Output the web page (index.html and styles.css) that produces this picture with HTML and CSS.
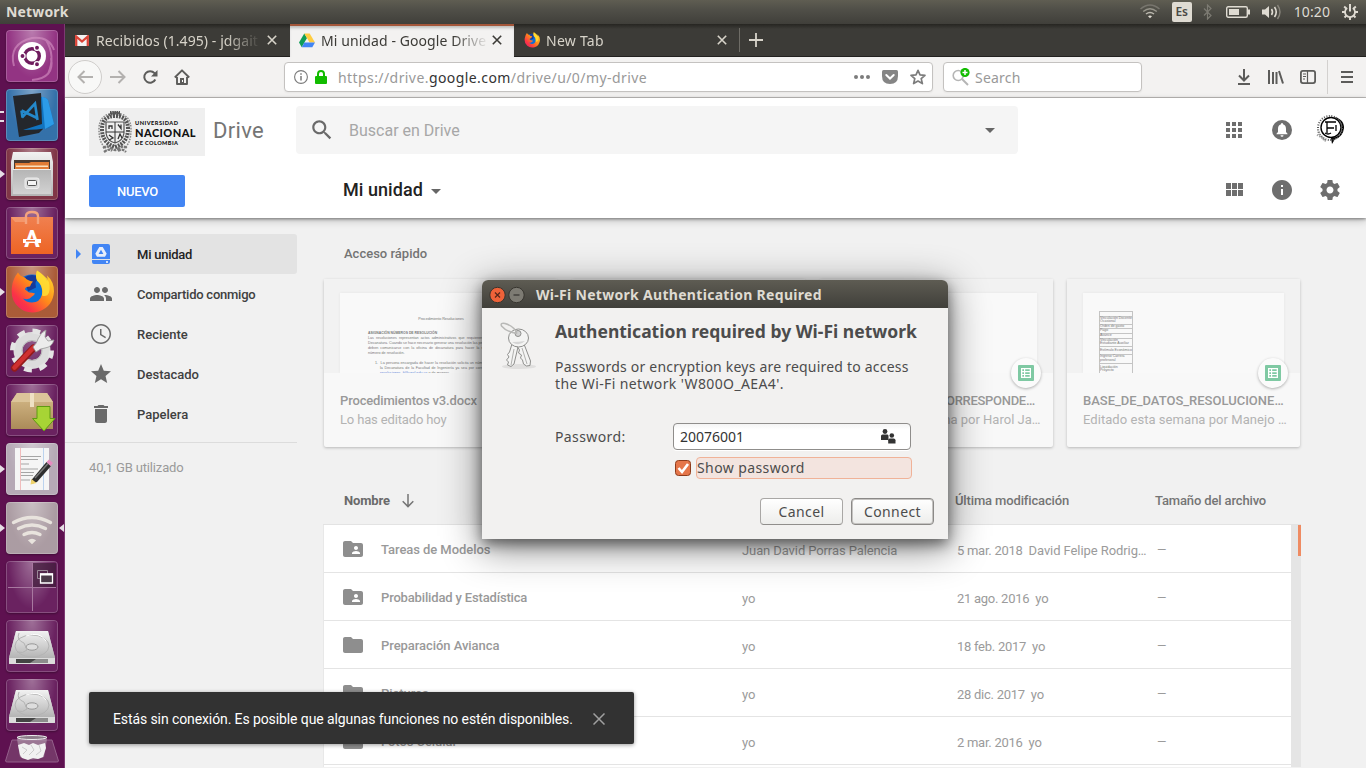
FILE: index.html
```html
<!DOCTYPE html>
<html lang="es">
<head>
<meta charset="utf-8">
<title>Mi unidad - Google Drive</title>
<link rel="stylesheet" href="styles.css">
</head>
<body>
<svg class="defs" width="0" height="0">
  <defs>
    <linearGradient id="metal" x1="0" y1="0" x2="0" y2="1"><stop offset="0" stop-color="#f2f2f2"/><stop offset="1" stop-color="#b4b4b4"/></linearGradient>
    <linearGradient id="front" x1="0" y1="0" x2="0" y2="1"><stop offset="0" stop-color="#b4b4b4"/><stop offset="1" stop-color="#d2d2d2"/></linearGradient>
    <linearGradient id="bag" x1="0" y1="0" x2="0" y2="1"><stop offset="0" stop-color="#f08050"/><stop offset="1" stop-color="#ed6424"/></linearGradient>
    <linearGradient id="fox" x1="1" y1="0" x2="0" y2="1"><stop offset="0" stop-color="#ffe52e"/><stop offset=".45" stop-color="#ff8a1a"/><stop offset=".75" stop-color="#fb3347"/><stop offset="1" stop-color="#e5206b"/></linearGradient>
    <linearGradient id="box" x1="0" y1="0" x2="0" y2="1"><stop offset="0" stop-color="#d6bb8a"/><stop offset="1" stop-color="#ab8b59"/></linearGradient>
    <symbol id="i-folder" viewBox="0 0 24 24"><path d="M10 4H4c-1.1 0-1.99.9-1.99 2L2 18c0 1.1.9 2 2 2h16c1.1 0 2-.9 2-2V8c0-1.1-.9-2-2-2h-8l-2-2z"/></symbol>
    <symbol id="i-shared" viewBox="0 0 24 24"><path d="M20 6h-8l-2-2H4c-1.1 0-1.99.9-1.99 2L2 18c0 1.1.9 2 2 2h16c1.1 0 2-.9 2-2V8c0-1.1-.9-2-2-2zm-5 3c1.1 0 2 .9 2 2s-.9 2-2 2-2-.9-2-2 .9-2 2-2zm4 8h-8v-1c0-1.33 2.67-2 4-2s4 .67 4 2v1z"/></symbol>
    <symbol id="i-sheet" viewBox="0 0 16 16"><rect width="16" height="16" rx="1" fill="#7fc9a3"/><path fill="#fff" fill-rule="evenodd" d="M3 3h10v10H3zM4.300 4.300v1.700h1.700v-1.700zM7.200 4.300v1.700h4.500v-1.700zM4.300 7.200v1.700h1.700v-1.700zM7.200 7.200v1.700h4.500v-1.700zM4.300 10.100v1.700h1.700v-1.700zM7.200 10.100v1.700h4.500v-1.700z"/></symbol>
    <symbol id="i-firefox" viewBox="0 0 44 44"><circle cx="22" cy="22" r="17" fill="#0a6fd8"/><path d="M14 8q8-5 16 0-6 3-4 10l-8 4z" fill="#153a9c"/><path fill="url(#fox)" d="M27 1q-2 5 0 10 6 5 5 14-2 8-10 8-6 0-9-4 6 2 9-2 2-1 3-3-3-1-6-1l-4-3q0-3 5-3 1-3 3-5-6-1-8-4-5-1-7-5-5 6-6 14-2 14 7 21 8 7 20 4 14-5 15-20 0-10-7-16 1 4 0 6-3-7-10-11z"/><path d="M27 1q-2 5 0 10 7 6 5 15 5 2 7-3 2-8-2-14-3-3-10-8z" fill="#ffe436" opacity=".8"/></symbol>
    <symbol id="i-disk" viewBox="0 0 52 52"><path d="M10 11h32l7 27v6H3v-6z" fill="#c9c9c9"/><path d="M10 11h32l7 27H3z" fill="url(#metal)"/><path d="M3 38h46v5q0 1-2 1H5q-2 0-2-1z" fill="#dcdcdc"/><path d="M10 39h32v4H10z" fill="#444"/><path d="M30 39h12v4H24z" fill="#8c8c8c"/><ellipse cx="26" cy="26" rx="17" ry="11" fill="none" stroke="#b4b4b4"/><path d="M20 16q14-5 20 5" fill="none" stroke="#fff"/><ellipse cx="26" cy="27" rx="6" ry="3.200" fill="#ddd" stroke="#999"/><path d="M13 13q-3 7 5 10l3 7q-4 4-10 2" fill="none" stroke="#b4b4b4"/></symbol>
  </defs>
</svg>

<div class="panel">
  <span class="panel-title">Network</span>
  <div class="indicators">
    <svg class="ind-wifi" width="20" height="16" viewBox="0 0 20 16" fill="none" stroke-width="1.500"><path d="M.5 5q9.500-8 19 0" stroke="#77756d"/><path d="M3.200 7.500q6.800-5.500 13.600 0" stroke="#96948a"/><path d="M6 10q4-3.200 8 0" stroke="#bcb9af"/><path d="M8 12.200q2-1.600 4 0l-2 2z" fill="#dfdbd2"/></svg>
    <span class="ind-lang">Es</span>
    <svg class="ind-bt" width="10" height="16" viewBox="0 0 10 16" fill="none" stroke="#7d7b73" stroke-width="1.200"><path d="M1 4.500l7 7-3.500 3.500V1L8 4.500l-7 7"/></svg>
    <svg class="ind-bat" width="24" height="12" viewBox="0 0 24 12"><rect x=".7" y=".7" width="20.600" height="10.600" rx="1.500" fill="none" stroke="#dfdbd2" stroke-width="1.400"/><rect x="3" y="3" width="10" height="6" fill="#dfdbd2"/><path d="M22 3.500h2v5h-2z" fill="#dfdbd2"/></svg>
    <svg class="ind-vol" width="20" height="16" viewBox="0 0 20 16"><path d="M0 5.500h3l4-3.500v12l-4-3.500H0z" fill="#dfdbd2"/><path d="M9.500 5q2 3 0 6M12.500 3q3.500 5 0 10" fill="none" stroke="#dfdbd2" stroke-width="1.600"/><path d="M15.500 1q5 7 0 14" fill="none" stroke="#88857c" stroke-width="1.400"/></svg>
    <span class="ind-clock">10:20</span>
    <svg class="ind-power" width="16" height="16" viewBox="0 0 16 16" fill="none" stroke="#dfdbd2"><path d="M5.200 4a5 5 0 1 0 5.600 0" stroke-width="1.800"/><path d="M8 0v7.500" stroke-width="2"/><path d="M8 13v3M0 8h3M13 8h3M2.200 2.500l2 2M13.800 2.500l-2 2M2.500 13.500l2-2M13.500 13.500l-2-2" stroke-width="1.900"/></svg>
  </div>
</div>

<div class="desktop">
<nav class="launcher">
  <div class="tile t-dash"><svg viewBox="0 0 52 52"><path d="M8 36Q2 14 26 8q17-2 22 12M45 28q4 20-19 22M40 10q10 16 2 34" fill="none" stroke="#d795c4" stroke-width="2" opacity=".6"/><circle cx="26" cy="26" r="14" fill="#fff"/><circle cx="26" cy="26" r="7.300" fill="none" stroke="#6f1c5e" stroke-width="3.400"/><g fill="#6f1c5e" stroke="#fff" stroke-width="1.300"><circle cx="16.500" cy="26" r="2.600"/><circle cx="31" cy="17.700" r="2.600"/><circle cx="31" cy="34.300" r="2.600"/></g></svg></div>
  <div class="tile t-code pip-two"><svg viewBox="0 0 52 52"><path d="M7 7l28-3 2 36-4 4-20 4z" fill="#24272c"/><path d="M35 8q5 0 7 3l6 24-5 4q-12 2-26 2l19-6z" fill="#1173bf"/><path d="M36 8q4 0 6 3l6 24-9 5z" fill="#2c9be8"/><path d="M15.500 21.500L31 29M16 28.500l13-14L31.500 31M15.500 21.500l1 7" fill="none" stroke="#2489cb" stroke-width="2.600"/></svg></div>
  <div class="tile t-files pip"><svg viewBox="0 0 52 52"><path d="M7 4h38l2 10v34H5V14z" fill="url(#metal)"/><path d="M8 12h36v13H8z" fill="#4a3a31"/><path d="M9 15h14l2-1h18v11H9z" fill="#e07b35"/><path d="M10 17.500h32V19H10z" fill="#fbe0bd"/><path d="M7 21h38v25H7z" fill="url(#front)"/><path d="M7 21.500h38" stroke="#eee"/><rect x="19" y="30" width="14" height="10.500" rx="2" fill="#ddd" stroke="#eee"/><rect x="21.500" y="32.500" width="9" height="5" rx="1" fill="#f4f4f4" stroke="#555"/></svg></div>
  <div class="tile t-store"><svg viewBox="0 0 52 52"><path d="M5 10h42v37H5z" fill="url(#bag)"/><path d="M5 10h15v5H9z" fill="#f7a981" opacity=".6"/><path d="M20 17V9q0-4 6-4t6 4v8" fill="none" stroke="#f4a37d" stroke-width="2.400"/><text x="26" y="40" text-anchor="middle" class="store-letter">A</text><path d="M17 32h18v4H17z" fill="#fff"/><path d="M20 33.800h9" stroke="#ed6a30" stroke-width="1.500"/></svg></div>
  <div class="tile t-fox pip"><svg viewBox="0 0 52 52"><use href="#i-firefox" x="4" y="3" width="44" height="45"/></svg></div>
  <div class="tile t-plain"><svg viewBox="0 0 52 52"><circle cx="26" cy="25.500" r="14" fill="none" stroke="#dcdcdc" stroke-width="9"/><circle cx="26" cy="25.500" r="19.500" fill="none" stroke="#e4e4e4" stroke-width="5" stroke-dasharray="7.700 7.600"/><circle cx="26" cy="25.500" r="10" fill="none" stroke="#b8b8b8"/><path d="M8.500 43l19-20" stroke="#941b1b" stroke-width="7" stroke-linecap="round"/><path d="M8.500 42.500l19-20" stroke="#cf3030" stroke-width="4.500" stroke-linecap="round"/><path d="M27 22q4-4 5-8 3-7 8-9l-1 7 3 4 6-1q-2 7-9 8-4 0-9 4z" fill="#ececec" stroke="#999" stroke-width=".8"/></svg></div>
  <div class="tile t-plain"><svg viewBox="0 0 52 52"><path d="M11 9h30l6 9v27H5V18z" fill="url(#box)"/><path d="M11 9h30l6 9H5z" fill="#dcc59a"/><path d="M24 9h4v14h-4z" fill="#efe1c4"/><path d="M31 22.500h13v12h5L38 47 26.500 34.500H31z" fill="#a7d435" stroke="#5f9a12"/></svg></div>
  <div class="tile t-gray pip"><svg viewBox="0 0 52 52"><path d="M9 5h34v42H9z" fill="#f5f5f5"/><path d="M14.500 5v42" stroke="#f0bcbc"/><path d="M37.500 5v42" stroke="#bcd3ee"/><path d="M15 13.500h20M15 16.500h17M15 21h8M15 26h17M15 29.500h13M15 32.500h12M15 37h9" stroke="#a5a5a5" stroke-width="1"/><path d="M25.500 37l15-18 4.500 4-14 16-6 2z" fill="#2d2d2d"/><path d="M29 35l13.500-15" stroke="#777" stroke-width="1.500"/><path d="M40.500 19l2.500-2.500 4 3.500-2.500 3z" fill="#e68bc0"/><path d="M25.500 36l5 4-6 1.500z" fill="#f0d36a"/></svg></div>
  <div class="tile t-wifi pip pip-right"><svg viewBox="0 0 52 52" fill="none" stroke="#e8e3dd" stroke-width="3.400" stroke-linecap="round"><path d="M7.500 20.500q18.500-10 37 0M12.500 26.500q13.500-7 27 0M18 32.500q8-4 16 0"/><path d="M24 38.500q2-1 4 0l-2 2z" stroke-width="2.500"/></svg></div>
  <div class="tile t-space"><svg viewBox="0 0 52 52"><path d="M27 2h23v24H27z" fill="#3d1a38" opacity=".7"/><path d="M26.500 2v48M2 26.500h48" stroke="#a878a0"/><path d="M31.500 9.500h10v8h-10z" fill="none" stroke="#9a8a98"/><path d="M34.500 13h12v9h-12z" fill="#4a3a48" stroke="#fff" stroke-width="1.300"/><path d="M34 13.500h13" stroke="#fff" stroke-width="2"/></svg></div>
  <div class="tile t-plain"><svg viewBox="0 0 52 52"><use href="#i-disk"/></svg></div>
  <div class="tile t-plain"><svg viewBox="0 0 52 52"><use href="#i-disk"/></svg></div>
  <svg class="trash" viewBox="0 0 56 35"><path d="M8 6h40l6.500 21q0 1-2 1h-49q-2 0-2-1z" fill="#743668" stroke="#94608b"/><path d="M13 5q15-4 30 0l-3 18q-12 5-24 0z" fill="#b5a3b3" opacity=".6"/><ellipse cx="28" cy="3.500" rx="15" ry="2" fill="#8c7c89" stroke="#eee"/><path d="M14 11l6-2 5 2 4-2 5 2 7-2 1 5-3 9-5 2-5-1-5 2-6-2-2-3z" fill="#f1f1f1"/><path d="M18 13l5 3-4 4M27 11l3 5-5 5M35 11l2 6-5 4" fill="none" stroke="#ccc"/></svg>
</nav>

<div class="browser">
  <div class="tabs">
    <div class="tab tab-1">
      <svg class="fav" width="14" height="11" viewBox="0 0 14 11"><rect width="14" height="11" rx="1" fill="#f3f3f3"/><path d="M1.200 11V1.500L7 6.500l5.800-5V11" fill="none" stroke="#db4437" stroke-width="2.300"/></svg>
      <span class="tab-label">Recibidos (1.495) - jdgait</span>
      <svg class="x" width="10" height="10" viewBox="0 0 10 10"><path d="M.8.8l8.400 8.400M9.200.8L.8 9.200"/></svg>
    </div>
    <div class="tab tab-2">
      <svg class="fav" width="16" height="15" viewBox="0 0 16 15"><path d="M5.300.5L0 9.600l2.700 4.700L8 5.100z" fill="#0f9d58"/><path d="M5.300.5h5.400L16 9.600h-5.400z" fill="#ffcd40"/><path d="M2.700 14.300h10.600L16 9.600H5.400z" fill="#4285f4"/></svg>
      <span class="tab-label">Mi unidad - Google Drive</span>
      <svg class="x" width="10" height="10" viewBox="0 0 10 10"><path d="M.8.8l8.400 8.400M9.200.8L.8 9.200"/></svg>
    </div>
    <div class="tab tab-3">
      <svg class="fav" width="16" height="16"><use href="#i-firefox"/></svg>
      <span class="tab-label">New Tab</span>
      <svg class="x" width="10" height="10" viewBox="0 0 10 10"><path d="M.8.8l8.400 8.400M9.200.8L.8 9.200"/></svg>
    </div>
    <svg class="plus" width="14" height="14" viewBox="0 0 14 14"><path d="M7 0v14M0 7h14" stroke="#d8d4ca" stroke-width="1.800"/></svg>
  </div>

  <div class="toolbar">
    <div class="back"><svg width="16" height="14" viewBox="0 0 16 14"><path d="M16 7H1.500M7.500 1L1.500 7l6 6"/></svg></div>
    <svg class="fwd" width="16" height="14" viewBox="0 0 16 14"><path d="M0 7h14.500M8.500 1l6 6-6 6"/></svg>
    <svg class="tb-reload" width="16" height="16" viewBox="0 0 16 16"><path d="M13.300 10.500A5.800 5.800 0 1 1 12.500 4.200l1 1.300" fill="none" stroke="#5c5c5a" stroke-width="2"/><path d="M15.500 1v6.500H9z" fill="#5c5c5a"/></svg>
    <svg class="tb-home" width="16" height="16" viewBox="0 0 16 16"><path d="M.8 8.500L8 1.300l7.200 7.200M3 8v7h10V8" fill="none" stroke="#5c5c5a" stroke-width="1.900" stroke-linejoin="round"/><path d="M6 9h4v6H6z" fill="#5c5c5a"/><path d="M8 11h1v2H8z" fill="#fff"/></svg>
    <div class="urlbar">
      <svg width="14" height="14" viewBox="0 0 14 14"><circle cx="7" cy="7" r="6.400" fill="none" stroke="#7a7a7a" stroke-width="1.100"/><path d="M7 6v4.500M7 3.300v1.400" stroke="#7a7a7a" stroke-width="1.500"/></svg>
      <svg class="lock" width="12" height="14" viewBox="0 0 12 14"><path d="M3 7V4a3 3 0 0 1 6 0v3" fill="none" stroke="#12bc00" stroke-width="2"/><rect y="6" width="12" height="8" rx="1" fill="#12bc00"/></svg>
      <span class="url">https://drive.<b>google.com</b>/drive/u/0/my-drive</span>
      <svg class="dots" width="16" height="4" viewBox="0 0 16 4" fill="#7c7c7c"><circle cx="2" cy="2" r="2"/><circle cx="8" cy="2" r="2"/><circle cx="14" cy="2" r="2"/></svg>
      <svg class="pocket" width="16" height="14" viewBox="0 0 16 14"><path d="M1.500 0h13Q16 0 16 1.500V6q0 8-8 8T0 6V1.500Q0 0 1.500 0z" fill="#858585"/><path d="M4.300 5L8 8.500 11.700 5" fill="none" stroke="#fff" stroke-width="2" stroke-linecap="round"/></svg>
      <svg class="fav-star" width="16" height="16" viewBox="0 0 16 16"><path d="M8 1.300l2 4.600 5 .4-3.800 3.300 1.200 5L8 12l-4.400 2.600 1.200-5L1 6.300l5-.4z" fill="none" stroke="#7c7c7c" stroke-width="1.700" stroke-linejoin="round"/></svg>
    </div>
    <div class="searchbar">
      <svg width="18" height="18" viewBox="0 0 18 18"><circle cx="6.200" cy="7.500" r="5" fill="none" stroke="#b5b5b5" stroke-width="1.600"/><path d="M10 11l6 6" stroke="#b5b5b5" stroke-width="2"/><circle cx="13" cy="4.500" r="4.600" fill="#12bc00"/><path d="M13 2v5M10.500 4.500h5" stroke="#fff" stroke-width="1.500"/></svg>
      <span>Search</span>
    </div>
    <div class="tools">
      <svg width="14" height="16" viewBox="0 0 14 16" fill="none" stroke="#5c5c5a" stroke-width="2"><path d="M7 0v11M2 6.500l5 5 5-5M1 15h12"/></svg>
      <svg width="16" height="14" viewBox="0 0 16 14" fill="none" stroke="#5c5c5a" stroke-width="2"><path d="M1 0v14M5 2v12M8.500 2v12M11 1l4 12.500"/></svg>
      <svg width="16" height="14" viewBox="0 0 16 14" fill="none" stroke="#5c5c5a"><rect x=".9" y=".9" width="14.200" height="12.200" rx="2" stroke-width="1.800"/><path d="M7.500 1v12M3 4h3M3 6.500h3M3 9h2" stroke-width="1.200"/></svg>
      <i></i>
      <svg width="12" height="12" viewBox="0 0 12 12" stroke="#5c5c5a" stroke-width="1.800"><path d="M0 1h12M0 6h12M0 11h12"/></svg>
    </div>
  </div>

  <div class="page">
    <header class="head">
      <div class="head-top">
        <div class="logo">
          <svg width="34" height="44" viewBox="0 0 34 44"><g fill="none" stroke="#555"><path d="M17 6Q4 6 4 19q0 14 13 18 13-4 13-18Q30 6 17 6z" stroke-width="4" stroke-dasharray="2 1"/><path d="M17 3Q1 4 1 19t7 19M17 3q16 1 16 16t-7 19" stroke-width="1.500" stroke-dasharray="1.500 1.200" stroke="#888"/><path d="M8 12h18v11q-1 8-9 10-8-2-9-10z" fill="#efefef" stroke-width="1.200"/><path d="M17 12v21M8 22h18" stroke-width="1" stroke="#333"/><path d="M11 19v-3h3v3M20 14.500l3 4v-4M11 25l4 3-4 2M20 29l2-5 2 4" stroke-width="1.300" stroke="#333"/><path d="M11 5.500q6-5 12 0M12 2.500h10" stroke-width="3" stroke-dasharray="1.500 .7"/><path d="M5 38q5-3 8 0 4 4 8 0 4-3 8 0M6 42q5-4 8-1M20 41q4-3 8 1" stroke-width="2.300" stroke="#777" stroke-dasharray="3 .8"/></g></svg>
          <div class="logo-text"><span class="l1">UNIVERSIDAD</span><span class="l2">NACIONAL</span><span class="l3">DE COLOMBIA</span></div>
        </div>
        <span class="product">Drive</span>
        <div class="search">
          <svg width="26" height="26" viewBox="0 0 24 24" fill="#6a6a6a"><path d="M15.500 14h-.79l-.28-.27C15.410 12.590 16 11.110 16 9.500 16 5.910 13.090 3 9.500 3S3 5.910 3 9.500 5.910 16 9.500 16c1.610 0 3.090-.59 4.230-1.570l.27.28v.79l5 4.990L20.490 19l-4.990-5zm-6 0C7.010 14 5 11.990 5 9.500S7.010 5 9.500 5 14 7.010 14 9.500 11.990 14 9.500 14z"/></svg>
          <span>Buscar en Drive</span>
          <i class="caret"></i>
        </div>
        <div class="acts">
          <svg width="24" height="24" viewBox="0 0 24 24"><path d="M4 8h4V4H4v4zm6 12h4v-4h-4v4zm-6 0h4v-4H4v4zm0-6h4v-4H4v4zm6 0h4v-4h-4v4zm6-10v4h4V4h-4zm-6 4h4V4h-4v4zm6 6h4v-4h-4v4zm0 6h4v-4h-4v4z"/></svg>
          <svg width="24" height="24" viewBox="0 0 24 24"><circle cx="12" cy="12" r="10"/><path d="M12 5q-1 0-1 1.200C8.700 7 8 8.800 8 11v3l-1.500 1.700v.6h11v-.6L16 14v-3c0-2.200-.7-4-3-4.800Q13 5 12 5zm-1.500 12.300a1.500 1.500 0 0 0 3 0z" fill="#fff"/></svg>
          <svg class="avatar" width="30" height="30" viewBox="0 0 30 30"><circle cx="16" cy="12.500" r="10" fill="none" stroke="#000" stroke-width="1.400"/><path d="M17 2q12 1 12 11-1 9-9 11l-3 5-1-6q11-1 11-10 0-9-10-11z" fill="#000"/><circle cx="15" cy="13" r="12" fill="none" stroke="#555" stroke-width="2" stroke-dasharray="1 1.500"/><path d="M3 14q0 7 7 11M2 20l6 3M8 24l4 3" fill="none" stroke="#999" stroke-dasharray="1 1.500" stroke-width="2"/><path d="M10 7h11M12 13h7M12 7v11M21 10v6M10 18q3 2 6 0" fill="none" stroke="#000" stroke-width="1.300"/></svg>
        </div>
      </div>
      <div class="head-bottom">
        <span class="nuevo">NUEVO</span>
        <span class="crumb">Mi unidad</span><i class="caret"></i>
        <div class="acts">
          <svg width="24" height="24" viewBox="0 0 24 24"><path d="M4 11h5V5H4v6zm0 7h5v-6H4v6zm6 0h5v-6h-5v6zm6 0h5v-6h-5v6zm-6-7h5V5h-5v6zm6-6v6h5V5h-5z"/></svg>
          <svg width="24" height="24" viewBox="0 0 24 24"><path d="M12 2C6.480 2 2 6.480 2 12s4.480 10 10 10 10-4.480 10-10S17.520 2 12 2zm1 15h-2v-6h2v6zm0-8h-2V7h2v2z"/></svg>
          <svg width="24" height="24" viewBox="0 0 24 24"><path d="M19.430 12.980c.04-.32.07-.64.07-.98s-.03-.66-.07-.98l2.110-1.650c.19-.15.24-.42.12-.64l-2-3.460c-.12-.22-.39-.3-.61-.22l-2.490 1c-.52-.4-1.080-.73-1.690-.98l-.38-2.650C14.460 2.180 14.250 2 14 2h-4c-.25 0-.46.18-.49.42l-.38 2.650c-.61.25-1.170.59-1.690.98l-2.490-1c-.23-.09-.49 0-.61.22l-2 3.460c-.13.22-.07.49.12.64l2.110 1.650c-.04.32-.07.65-.07.98s.03.66.07.98l-2.110 1.650c-.19.15-.24.42-.12.64l2 3.460c.12.22.39.3.61.22l2.490-1c.52.4 1.080.73 1.690.98l.38 2.650c.03.24.24.42.49.42h4c.25 0 .46-.18.49-.42l.38-2.650c.61-.25 1.170-.59 1.690-.98l2.490 1c.23.09.49 0 .61-.22l2-3.460c.12-.22.07-.49-.12-.64l-2.110-1.650zM12 15.500c-1.930 0-3.500-1.570-3.500-3.500s1.570-3.500 3.500-3.500 3.500 1.570 3.500 3.500-1.570 3.500-3.500 3.500z"/></svg>
        </div>
      </div>
    </header>

    <div class="content">
      <aside class="side">
        <div class="nav active tight"><i class="arrow"></i><svg width="24" height="24" viewBox="0 0 24 24"><path d="M5 2h14q2 0 2 2v13H3V4q0-2 2-2zM3 18h18v2q0 2-2 2H5q-2 0-2-2z" fill="#4285f4"/><path d="M10.300 5h3.400l4 6.800-1.700 2.900H8l-1.700-2.900zM12 7.800l-2.400 4.300h4.800z" fill="#e8eefa" fill-rule="evenodd"/><path d="M17 19.300h2v1.500h-2z" fill="#fff"/></svg><span>Mi unidad</span></div>
        <div class="nav tight"><i></i><svg width="24" height="24" viewBox="0 0 24 24"><path d="M16 11c1.660 0 2.990-1.340 2.990-3S17.660 5 16 5c-1.660 0-3 1.340-3 3s1.340 3 3 3zm-8 0c1.660 0 2.990-1.340 2.990-3S9.660 5 8 5C6.340 5 5 6.340 5 8s1.340 3 3 3zm0 2c-2.330 0-7 1.170-7 3.500V19h14v-2.500c0-2.330-4.670-3.500-7-3.500zm8 0c-.29 0-.62.02-.97.05 1.160.84 1.970 1.970 1.970 3.450V19h6v-2.500c0-2.330-4.670-3.500-7-3.500z"/></svg><span>Compartido conmigo</span></div>
        <div class="nav"><i></i><svg width="24" height="24" viewBox="0 0 24 24"><path d="M11.990 2C6.470 2 2 6.480 2 12s4.470 10 9.990 10C17.520 22 22 17.520 22 12S17.520 2 11.990 2zM12 20.500c-4.700 0-8.500-3.800-8.500-8.500S7.300 3.500 12 3.500s8.500 3.800 8.500 8.500-3.800 8.500-8.500 8.500zm.5-13.500H11v6l5.250 3.150.75-1.230-4.500-2.670z"/></svg><span>Reciente</span></div>
        <div class="nav"><i></i><svg width="24" height="24" viewBox="0 0 24 24"><path d="M12 17.270L18.180 21l-1.640-7.030L22 9.240l-7.190-.61L12 2 9.190 8.630 2 9.240l5.460 4.730L5.820 21z"/></svg><span>Destacado</span></div>
        <div class="nav"><i></i><svg width="24" height="24" viewBox="0 0 24 24"><path d="M6 19c0 1.100.9 2 2 2h8c1.100 0 2-.9 2-2V7H6v12zM19 4h-3.500l-1-1h-5l-1 1H5v2h14V4z"/></svg><span>Papelera</span></div>
        <div class="storage">40,1 GB utilizado</div>
      </aside>

      <main class="main">
        <h2 class="quick">Acceso rápido</h2>
        <div class="cards">
          <div class="card">
            <div class="thumb"><div class="sheet doc">
              <p class="doc-title">Procedimiento Resoluciones</p>
              <p><b>ASIGNACIÓN NÚMEROS DE RESOLUCIÓN</b></p>
              <p>Las resoluciones representan actos administrativos que requieren la aprobación de Decanatura. Cuando se hace necesario generar una resolución las personas encargadas deben comunicarse con la oficina de decanatura para hacer la solicitud formal del número de resolución.</p>
              <p class="doc-item">1. &nbsp;La persona encargada de hacer la resolución solicita un número al auxiliares de la Decanatura de la Facultad de Ingeniería ya sea por correo electrónico a la <span>resoluciones_fi@unal.edu.co</span> o de manera</p>
            </div></div>
            <div class="card-text"><b>Procedimientos v3.docx</b><span>Lo has editado hoy</span></div>
          </div>
          <div class="card"><div class="thumb"><div class="sheet"></div></div></div>
          <div class="card">
            <div class="thumb"><div class="sheet"></div></div>
            <span class="badge"><svg width="16" height="16"><use href="#i-sheet"/></svg></span>
            <div class="card-text third"><b>BASE_DE_DATOS_CORRESPONDE…</b><span>Editado esta semana por Harol Ja…</span></div>
          </div>
          <div class="card">
            <div class="thumb"><div class="sheet grid">
              <table><tr><td>&nbsp;</td></tr><tr><td>Vinculación Docente Ocasional</td></tr><tr><td>Orden de gasto</td></tr><tr><td>Pago</td></tr><tr><td>Avance</td></tr><tr><td>Vinculación Estudiante Auxiliar</td></tr><tr><td class="tall">Estímulo Económico</td></tr><tr><td>Ingreso Carrera profesoral</td></tr><tr><td class="tall">Liquidación Proyecto</td></tr><tr><td>Devoluciones</td></tr></table>
            </div></div>
            <span class="badge"><svg width="16" height="16"><use href="#i-sheet"/></svg></span>
            <div class="card-text fourth"><b>BASE_DE_DATOS_RESOLUCIONE…</b><span>Editado esta semana por Manejo …</span></div>
          </div>
        </div>
        <div class="row list-head"><span class="c-name">Nombre <svg width="12" height="14" viewBox="0 0 12 14"><path d="M6 0v12.500M.7 7.300L6 12.600l5.300-5.300" fill="none" stroke="#757575" stroke-width="1.500"/></svg></span><span class="c-owner"></span><span class="c-date">Última modificación</span><span class="c-size">Tamaño del archivo</span></div>
        <div class="list">
          <div class="rows">
            <div class="row"><svg><use href="#i-shared"/></svg><b class="c-name">Tareas de Modelos</b><span class="c-owner">Juan David Porras Palencia</span><span class="c-date">5 mar. 2018<em>David Felipe Rodrig…</em></span><span class="c-size">—</span></div>
            <div class="row"><svg><use href="#i-shared"/></svg><b class="c-name snug">Probabilidad y Estadística</b><span class="c-owner">yo</span><span class="c-date">21 ago. 2016<em>yo</em></span><span class="c-size">—</span></div>
            <div class="row"><svg><use href="#i-folder"/></svg><b class="c-name">Preparación Avianca</b><span class="c-owner">yo</span><span class="c-date">18 feb. 2017<em>yo</em></span><span class="c-size">—</span></div>
            <div class="row"><svg><use href="#i-folder"/></svg><b class="c-name">Pictures</b><span class="c-owner">yo</span><span class="c-date">28 dic. 2017<em>yo</em></span><span class="c-size">—</span></div>
            <div class="row"><svg><use href="#i-folder"/></svg><b class="c-name">Fotos Celular</b><span class="c-owner">yo</span><span class="c-date">2 mar. 2016<em>yo</em></span><span class="c-size">—</span></div>
          </div>
          <div class="scroll"><i></i></div>
        </div>
      </main>
    </div>
  </div>
</div>
</div>

<div class="snack"><span>Estás sin conexión. Es posible que algunas funciones no estén disponibles.</span><svg width="12" height="12" viewBox="0 0 12 12"><path d="M.5.5l11 11M11.500.5l-11 11" stroke="#a0a0a0" stroke-width="1.500"/></svg></div>

<div class="dialog">
  <div class="dlg-bar">
    <svg width="36" height="18" viewBox="0 0 36 18"><circle cx="8.500" cy="9" r="7.700" fill="#ee6239" stroke="#37352f"/><path d="M6 6.500l5 5M11 6.500l-5 5" stroke="#55261a" stroke-width="1.200"/><circle cx="27.500" cy="9" r="7.700" fill="#7d7b73" stroke="#37352f"/><path d="M24.500 9h6" stroke="#3a3935" stroke-width="1.300"/></svg>
    <span>Wi-Fi Network Authentication Required</span>
  </div>
  <div class="dlg-body">
    <svg class="keys" width="40" height="48" viewBox="0 0 40 48"><ellipse cx="20" cy="44.500" rx="17" ry="2.500" fill="#e0dfde"/><g fill="#f4f4f3" stroke="#8f8f8d" stroke-width="1"><path d="M13 22l6 3-4 17-3 2.500-3.500-1.500 1-3-2-2 2.500-3-1.500-2.500 2-2.500z"/><path d="M18 24l7-2 6.500 17-.5 4.500-3.500.5-3-2-1-4-2-2 1-3-3-2 1-3z"/><ellipse cx="19.500" cy="16" rx="10" ry="9"/><circle cx="19" cy="11.500" r="3" fill="#d2d2d2"/></g><path d="M13 20q7 5 13-1-6 1-13 1z" fill="#d5d5d5"/><path d="M18 11.500Q15 4 6 1.500 1 .5 2.500 4q5 6 15.500 7.500" fill="none" stroke="#b9b9b7" stroke-width="1.500"/><path d="M15 27l-3 16M23 26l5 16" stroke="#b0b0ae"/></svg>
    <div class="dlg-main">
      <h1>Authentication required by Wi-Fi network</h1>
      <p><span>Passwords or encryption keys are required to access</span><br><span class="line2">the Wi-Fi network 'W800O_AEA4'.</span></p>
      <div class="field"><label>Password:</label><div class="input"><span>20076001</span><svg width="15" height="15" viewBox="0 0 15 15" fill="#333"><circle cx="4" cy="2.500" r="2.400"/><path d="M0 11V7q0-1.500 1.500-1.500h5Q7.500 5.500 7.500 7v4z"/><circle cx="10.800" cy="6.500" r="2.300"/><path d="M7.200 14.500v-3.200q0-1.800 1.500-1.800h4q1.800 0 1.800 1.800v3.200z"/></svg></div></div>
      <div class="check"><svg width="18" height="18" viewBox="0 0 18 18"><rect x="1.500" y="1.500" width="15" height="15" rx="3" fill="#e5764a" stroke="#8e3c1c"/><path d="M4.500 9l3.500 4L14 5" fill="none" stroke="#fff" stroke-width="2.600"/></svg><span>Show password</span></div>
    </div>
  </div>
  <div class="dlg-btns"><span class="btn">Cancel</span><span class="btn primary">Connect</span></div>
</div>
</body>
</html>
```
FILE: styles.css
```css
* { box-sizing: border-box; }
html, body { margin: 0; padding: 0; }
body { width: 1366px; height: 768px; overflow: hidden; position: relative; font-family: Roboto, "Noto Sans", sans-serif; background: #f1f1f1; display: flex; flex-direction: column; }
svg { display: block; flex: none; }
.defs { position: absolute; }
i, em { font-style: normal; }

/* top panel */
.panel { height: 24px; flex: none; display: flex; justify-content: space-between; align-items: center; padding: 0 8px 0 6px; background: linear-gradient(#5f5d52, #504f48 40%, #403f3a); color: #dfdbd2; font-family: "Noto Sans", sans-serif; font-size: 14px; }
.panel-title { font-weight: 700; letter-spacing: .15px; margin-top: -1px; }
.indicators { display: flex; align-items: center; }
.ind-lang { width: 20px; height: 20px; margin: 0 11px 0 12px; border-radius: 2px; background: #dfdbd2; color: #4a4944; font-size: 12px; line-height: 20px; text-align: center; font-weight: 600; }
.ind-bat { margin-left: 13px; }
.ind-vol { margin-left: 12px; }
.ind-clock { margin: -1px 12px 0 12px; font-size: 14px; letter-spacing: .1px; }

.desktop { flex: 1; display: flex; min-height: 0; }

/* launcher */
.launcher { width: 65px; flex: none; background: #5e1150; border-right: 1px solid #7d3a72; padding: 6px 6px 0; display: flex; flex-direction: column; gap: 7px; position: relative; }
.tile { width: 52px; height: 52px; flex: none; border-radius: 4px; position: relative; background-color: #722a66; background-image: radial-gradient(ellipse at 50% 0, rgba(255,255,255,.38), rgba(255,255,255,.04) 65%); box-shadow: inset 0 0 0 1px rgba(255,255,255,.2), 0 1px 2px rgba(0,0,0,.3); }
.tile svg { width: 52px; height: 52px; }
.t-dash { background-color: #8f2c7e; }
.t-code { background-color: #2c6ba6; }
.t-files { background-color: #7b2e40; }
.t-fox { background-color: #a75530; }
.t-gray { background-color: #b3a6b3; }
.t-wifi { background-color: #a8989f; }
.t-space, .t-plain, .t-store { background-color: #64195a; }
.store-letter { font: 700 23px Roboto, sans-serif; fill: #fff; }
.pip::before, .pip-right::after { content: ""; position: absolute; top: 22px; border: 4px solid transparent; }
.pip::before { left: -6px; border-left: 5px solid #e6dfe5; border-right: 0; }
.pip-right::after { right: -6px; border-right: 5px solid #e6dfe5; border-left: 0; }
.pip-two::before { content: ""; position: absolute; left: -6px; top: 22px; width: 4px; height: 7px; border-top: 2px solid #e6dfe5; border-bottom: 2px solid #e6dfe5; }
.trash { width: 56px; height: 35px; margin: -4px 0 0 -2px; }

/* browser chrome */
.browser { flex: 1; display: flex; flex-direction: column; min-width: 0; font-family: "Noto Sans", sans-serif; }
.tabs { height: 33px; flex: none; display: flex; align-items: center; background: linear-gradient(#262521, #3c3b37 5px); border-bottom: 1px solid #22211f; color: #d8d4ca; font-size: 14px; }
.tab { height: 33px; display: flex; align-items: center; white-space: nowrap; flex: none; }
.tab-label { -webkit-mask-image: linear-gradient(90deg, #000 calc(100% - 36px), transparent); mask-image: linear-gradient(90deg, #000 calc(100% - 36px), transparent); }
.x path { stroke: currentColor; stroke-width: 1.6; }
.tab-1 { width: 225px; padding-left: 10px; }
.tab-1 .tab-label { width: 165px; margin: 0 6px 0 7px; letter-spacing: .08px; }
.tab-2 { width: 224px; padding-left: 9px; background: #f3f2f1; color: #3c3b37; border-top: 2px solid #a3563a; box-shadow: inset 0 3px 3px -1px #bbb; padding-bottom: 2px; }
.tab-2 .tab-label { width: 168px; margin: 0 3px 0 6px; letter-spacing: .08px; }
.tab-3 { width: 226px; height: 24px; padding-left: 10px; border-right: 1px solid #6e6c66; }
.tab-3 .tab-label { width: 170px; margin: 0 1px 0 6px; letter-spacing: .25px; }
.plus { margin-left: 9px; }
.toolbar { height: 41px; flex: none; display: flex; align-items: center; background: #f3f2f1; border-bottom: 1px solid #c2c0be; padding: 0 13px 0 3px; }
.back { width: 34px; height: 34px; border: 1px solid #cfcdcb; border-radius: 50%; background: #f8f8f7; display: flex; align-items: center; justify-content: center; }
.back path, .fwd path { fill: none; stroke: #b3b1af; stroke-width: 2; }
.fwd { margin-left: 8px; }
.tb-reload { margin-left: 16px; }
.tb-home { margin-left: 16px; }
.urlbar, .searchbar { height: 30px; background: #fff; border: 1px solid #c4c2c0; border-radius: 4px; display: flex; align-items: center; font-size: 14px; color: #999; box-shadow: 0 1px 2px rgba(0,0,0,.05); }
.urlbar { width: 649px; margin-left: 94px; padding: 0 6px 0 9px; }
.lock { margin: 0 11px 0 7px; }
.url { flex: 1; letter-spacing: .42px; }
.url b { font-weight: 400; color: #333; }
.pocket { margin: 0 12px; }
.searchbar { width: 199px; margin-left: 10px; padding-left: 8px; gap: 5px; letter-spacing: .2px; }
.tools { margin-left: auto; display: flex; align-items: center; gap: 16px; }
.tools svg:first-child { margin-right: 1px; }
.tools i { width: 1px; height: 34px; background: #d3d1cf; margin: 0 -3px 0 -5px; }

/* drive header */
.page { flex: 1; display: flex; flex-direction: column; min-height: 0; background: #f1f1f1; font-family: Roboto, sans-serif; }
.head { height: 120px; flex: none; background: #fff; padding: 8px 24px 0; position: relative; box-shadow: 0 1px 3px rgba(0,0,0,.45), 0 3px 8px rgba(0,0,0,.18); }
.head-top { height: 48px; display: flex; align-items: center; }
.logo { width: 116px; height: 48px; margin-top: 4px; background: #efefef; display: flex; align-items: center; padding-left: 9px; gap: 3px; color: #111; }
.logo-text { display: flex; flex-direction: column; font-family: Lato, sans-serif; font-weight: 900; line-height: 1; white-space: nowrap; margin-top: 2px; }
.l1 { font-size: 5.600px; letter-spacing: .5px; }
.l2 { font-size: 11px; letter-spacing: .45px; margin: 1px 0 2px; }
.l3 { font-size: 5.600px; letter-spacing: .4px; }
.product { width: 91px; padding-left: 8px; font-size: 22px; letter-spacing: .3px; color: #757575; }
.search { width: 722px; height: 48px; background: #f5f5f5; border-radius: 4px; display: flex; align-items: center; padding: 0 23px 0 13px; color: #a7a7a7; font-size: 16px; }
.search span { flex: 1; padding-left: 14px; }
.caret { border: 5px solid transparent; border-top-color: #666; border-bottom: 0; }
.acts { margin-left: auto; display: flex; align-items: center; gap: 24px; fill: #6e6e6e; }
.head-top .acts svg:last-child { margin: 0 -3px; }
.head-bottom { height: 32px; margin-top: 21px; display: flex; align-items: center; }
.head-bottom .acts { margin-top: -3px; }
.nuevo { width: 96px; height: 32px; line-height: 33px; padding-left: 1px; text-align: center; background: #4285f4; color: #fff; font-size: 13px; border-radius: 2px; font-weight: 500; letter-spacing: -.3px; }
.crumb { margin: -3px 8px 0 158px; font-size: 18px; font-weight: 500; color: #222; letter-spacing: .05px; }

/* content */
.content { flex: 1; display: flex; min-height: 0; overflow: hidden; }
.side { width: 232px; flex: none; padding-top: 16px; }
.nav { height: 40px; display: flex; align-items: center; font-size: 13px; font-weight: 500; color: #404040; }
.nav i { width: 24px; }
.nav svg { fill: #6a6a6a; margin-right: 24px; }
.nav.active { background: #e3e3e3; border-radius: 0 3px 3px 0; color: #222; }
.nav.tight { letter-spacing: -.24px; }
.nav .arrow { width: 5px; margin: 0 8px 0 11px; border: 5px solid transparent; border-left-color: #4285f4; border-right: 0; }
.storage { border-top: 1px solid #dcdcdc; margin-top: 8px; padding: 17px 24px; font-size: 13px; letter-spacing: -.15px; color: #9a9a9a; }
.main { width: 978px; margin-left: 26px; display: flex; flex-direction: column; }
.quick { margin: 0; height: 61px; padding: 27px 0 0 21px; font-size: 13px; line-height: 17px; font-weight: 500; color: #747474; }
.cards { display: grid; grid-template-columns: 233px 233px 233px 233px; column-gap: 15px; padding: 0 1px; }
.card { height: 168px; background: #f8f8f8; border-radius: 2px; box-shadow: 0 1px 3px rgba(0,0,0,.24); position: relative; }
.card:last-child { margin: 0 1px 0 -1px; }
.thumb { height: 94px; background: #f2f2f2; padding: 14px 16px 0; overflow: hidden; }
.sheet { height: 80px; background: #f9f9f9; box-shadow: 0 0 3px rgba(0,0,0,.06); overflow: hidden; }
.doc { padding: 24px 28px 0; font: 3.700px/5px "Liberation Sans", sans-serif; color: #777; text-align: justify; }
.doc p { margin: 0; width: 146px; }
.doc b { font-size: 3.400px; }
.doc .doc-title { text-align: center; margin-bottom: 9px; letter-spacing: -.05px; }
.doc .doc-item { margin-top: 5px; padding-left: 12px; text-indent: -5px; }
.doc-item span { color: #5f83d6; }
.grid { padding: 18px 0 0 16px; }
.grid table { width: 34px; border-collapse: collapse; font: 3.500px/3.600px "Liberation Sans", sans-serif; color: #777; }
.grid td { border: 1px solid #c4c4c4; padding: 0; }
.grid .tall { padding: 2px 0; }
.badge { position: absolute; right: 12px; top: 79px; width: 30px; height: 30px; border-radius: 50%; background: #fbfbfb; box-shadow: 0 1px 3px rgba(0,0,0,.3); display: flex; align-items: center; justify-content: center; }
.card-text { padding: 18px 0 0 16px; display: flex; flex-direction: column; font-size: 13px; line-height: 19px; letter-spacing: -.15px; color: #b3b3b3; white-space: nowrap; }
.card-text b { font-weight: 500; color: #999; }
.third b { letter-spacing: -.3px; }
.third span, .fourth b { letter-spacing: 0; }
.fourth span { letter-spacing: .05px; }
.row { display: flex; align-items: center; }
.list-head { height: 77px; padding: 30px 0 0 21px; font-size: 13px; font-weight: 500; letter-spacing: -.14px; color: #757575; flex: none; }
.list-head .c-name { width: 398px; display: flex; gap: 12px; align-items: center; color: #6a6a6a; font-weight: 700; }
.list-head .c-owner { width: 213px; }
.list-head .c-date { width: 200px; }
.list { display: flex; border-top: 1px solid #e3e3e3; height: 243px; }
.rows { width: 968px; background: #fff; border-left: 1px solid #e8e8e8; }
.rows .row { height: 48px; border-bottom: 1px solid #e4e4e4; padding-left: 17px; font-size: 13px; color: #9b9b9b; }
.rows svg { width: 24px; height: 24px; fill: #8e8e8e; }
.rows .c-name { width: 377px; flex: none; padding: 2px 0 0 16px; font-weight: 500; color: #999; letter-spacing: -.06px; }
.rows .c-name.snug { letter-spacing: -.16px; }
.rows .c-owner { width: 215px; flex: none; padding-top: 4px; letter-spacing: -.1px; }
.rows .c-date { width: 200px; flex: none; padding-top: 4px; white-space: nowrap; letter-spacing: -.27px; }
.rows .c-size { padding-top: 3px; font-size: 12px; }
.c-date em { margin-left: 6px; letter-spacing: -.08px; }
.scroll { width: 10px; background: #e5e5e5; }
.scroll i { display: block; width: 3px; height: 31px; margin-left: 7px; background: #ef8b62; }

.snack { position: absolute; left: 89px; top: 692px; width: 545px; height: 52px; background: #323232; border-radius: 2px; box-shadow: 0 1px 4px rgba(0,0,0,.4); color: #fff; font-size: 14px; display: flex; align-items: center; padding: 2px 0 0 24px; }
.snack span { width: 480px; white-space: nowrap; letter-spacing: -.1px; }

/* wifi dialog */
.dialog { position: absolute; left: 482px; top: 280px; width: 466px; height: 259px; background: #f2f1f0; border-radius: 6px 6px 0 0; box-shadow: 0 8px 38px 2px rgba(0,0,0,.45), 0 5px 14px rgba(0,0,0,.5); font-family: "Noto Sans", sans-serif; font-size: 14px; letter-spacing: .4px; color: #4c4c4c; }
.dlg-bar { height: 28px; border-radius: 6px 6px 0 0; background: linear-gradient(#5e5c53, #403f3a); color: #dfdbd2; font-weight: 700; font-size: 14px; display: flex; align-items: center; padding: 1px 0 0 7px; gap: 11px; }
.dlg-bar span { letter-spacing: .3px; white-space: nowrap; }
.dlg-body { display: flex; padding: 14px 0 0 17px; height: 186px; }
.dlg-main { padding-left: 16px; }
.dlg-main h1 { margin: -3px 0 0; font-size: 17.500px; line-height: 24px; font-weight: 700; letter-spacing: 0; white-space: nowrap; }
.dlg-main p { margin: 15px 0 0; line-height: 17px; white-space: nowrap; letter-spacing: .21px; }
.dlg-main .line2 { letter-spacing: .38px; }
.field { display: flex; align-items: center; margin-top: 31px; }
.field label { width: 118px; }
.input { width: 238px; height: 27px; border: 1px solid #8f8d8b; border-radius: 4px; background: linear-gradient(#f4f4f4, #fff 6px); display: flex; align-items: center; justify-content: space-between; padding: 0 14px 0 6px; color: #333; letter-spacing: 0; box-shadow: 0 1px 0 #fff; }
.check { display: flex; align-items: center; margin: 7px 0 0 119px; gap: 4px; }
.check span { width: 216px; height: 22px; border: 1px solid #f0b298; background: #f3e4df; border-radius: 4px; line-height: 19px; }
.dlg-btns { display: flex; justify-content: flex-end; gap: 8px; padding: 4px 14px 0; }
.btn { width: 83px; height: 27px; border: 1px solid #a9a7a5; border-bottom-color: #908e8c; border-radius: 4px; background: linear-gradient(#fff, #ededeb); text-align: center; line-height: 25px; }
.primary { border-color: #8b8987; box-shadow: inset 0 0 0 1px #c5c3c1; }
```
